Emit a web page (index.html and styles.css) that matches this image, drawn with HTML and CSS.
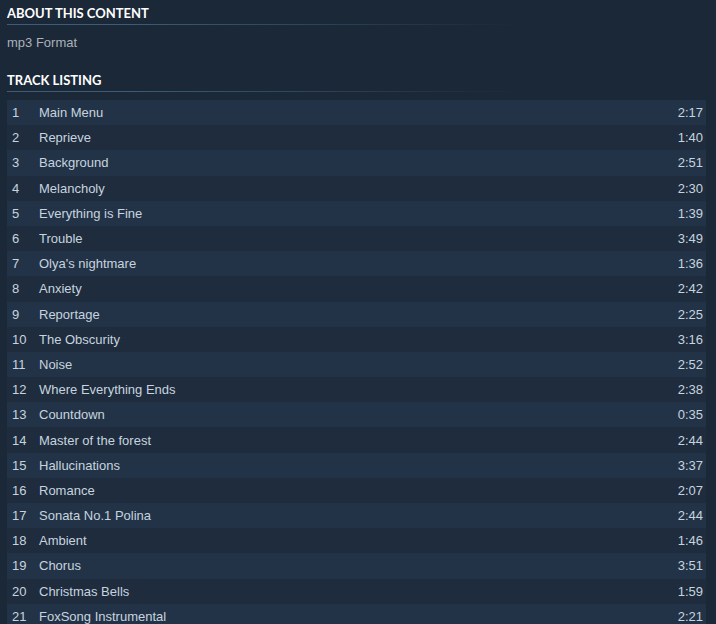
FILE: index.html
```html
<!DOCTYPE html>
<html>
<head>
<meta charset="utf-8">
<link rel="stylesheet" href="styles.css">
</head>
<body>
<div class="page">
  <h2 class="block-title">About This Content</h2>
  <p class="about">mp3 Format</p>
  <h2 class="block-title tracks-title">Track Listing</h2>
  <div class="tracks">
    <div class="track"><span class="num">1</span><span class="name">Main Menu</span><span class="dur">2:17</span></div>
    <div class="track"><span class="num">2</span><span class="name">Reprieve</span><span class="dur">1:40</span></div>
    <div class="track"><span class="num">3</span><span class="name">Background</span><span class="dur">2:51</span></div>
    <div class="track"><span class="num">4</span><span class="name">Melancholy</span><span class="dur">2:30</span></div>
    <div class="track"><span class="num">5</span><span class="name">Everything is Fine</span><span class="dur">1:39</span></div>
    <div class="track"><span class="num">6</span><span class="name">Trouble</span><span class="dur">3:49</span></div>
    <div class="track"><span class="num">7</span><span class="name">Olya's nightmare</span><span class="dur">1:36</span></div>
    <div class="track"><span class="num">8</span><span class="name">Anxiety</span><span class="dur">2:42</span></div>
    <div class="track"><span class="num">9</span><span class="name">Reportage</span><span class="dur">2:25</span></div>
    <div class="track"><span class="num">10</span><span class="name">The Obscurity</span><span class="dur">3:16</span></div>
    <div class="track"><span class="num">11</span><span class="name">Noise</span><span class="dur">2:52</span></div>
    <div class="track"><span class="num">12</span><span class="name">Where Everything Ends</span><span class="dur">2:38</span></div>
    <div class="track"><span class="num">13</span><span class="name">Countdown</span><span class="dur">0:35</span></div>
    <div class="track"><span class="num">14</span><span class="name">Master of the forest</span><span class="dur">2:44</span></div>
    <div class="track"><span class="num">15</span><span class="name">Hallucinations</span><span class="dur">3:37</span></div>
    <div class="track"><span class="num">16</span><span class="name">Romance</span><span class="dur">2:07</span></div>
    <div class="track"><span class="num">17</span><span class="name">Sonata No.1 Polina</span><span class="dur">2:44</span></div>
    <div class="track"><span class="num">18</span><span class="name">Ambient</span><span class="dur">1:46</span></div>
    <div class="track"><span class="num">19</span><span class="name">Chorus</span><span class="dur">3:51</span></div>
    <div class="track"><span class="num">20</span><span class="name">Christmas Bells</span><span class="dur">1:59</span></div>
    <div class="track"><span class="num">21</span><span class="name">FoxSong Instrumental</span><span class="dur">2:21</span></div>
  </div>
</div>
</body>
</html>
```
FILE: styles.css
```css
html, body {
  margin: 0;
  padding: 0;
  background: #1b2838;
}
body {
  font-family: "Liberation Sans", Arial, sans-serif;
  color: #c6d4df;
  overflow: hidden;
}
.page {
  padding: 0 10px 0 7px;
}
.block-title {
  margin: 0;
  padding-top: 5px;
  height: 20px;
  font-family: Lato, "Liberation Sans", sans-serif;
  font-size: 13px;
  font-weight: bold;
  text-transform: uppercase;
  letter-spacing: 0;
  color: #ffffff;
  line-height: 16px;
  position: relative;
  width: 600px;
}
.block-title::after {
  content: "";
  position: absolute;
  left: 0;
  right: 0;
  bottom: 0;
  height: 1px;
  background: linear-gradient(to right, #3e5c75 0%, #3e5c75 20%, rgba(62, 92, 117, 0) 85%);
}
.about {
  margin: 0;
  padding-top: 10px;
  font-size: 13px;
  line-height: 16px;
  color: #acb2b8;
  height: 28px;
}
.tracks-title {
  padding-top: 9px;
  height: 20px;
}
.tracks {
  margin-top: 8px;
}
.track {
  display: flex;
  align-items: center;
  height: 25.2px;
  font-size: 13px;
  color: #c6d4df;
}
.track:nth-child(odd) {
  background: #233347;
}
.track:nth-child(even) {
  background: #1e2c3e;
}
.num {
  width: 32px;
  padding-left: 5px;
  box-sizing: border-box;
}
.name {
  flex: 1;
}
.dur {
  padding-right: 3px;
}
```
